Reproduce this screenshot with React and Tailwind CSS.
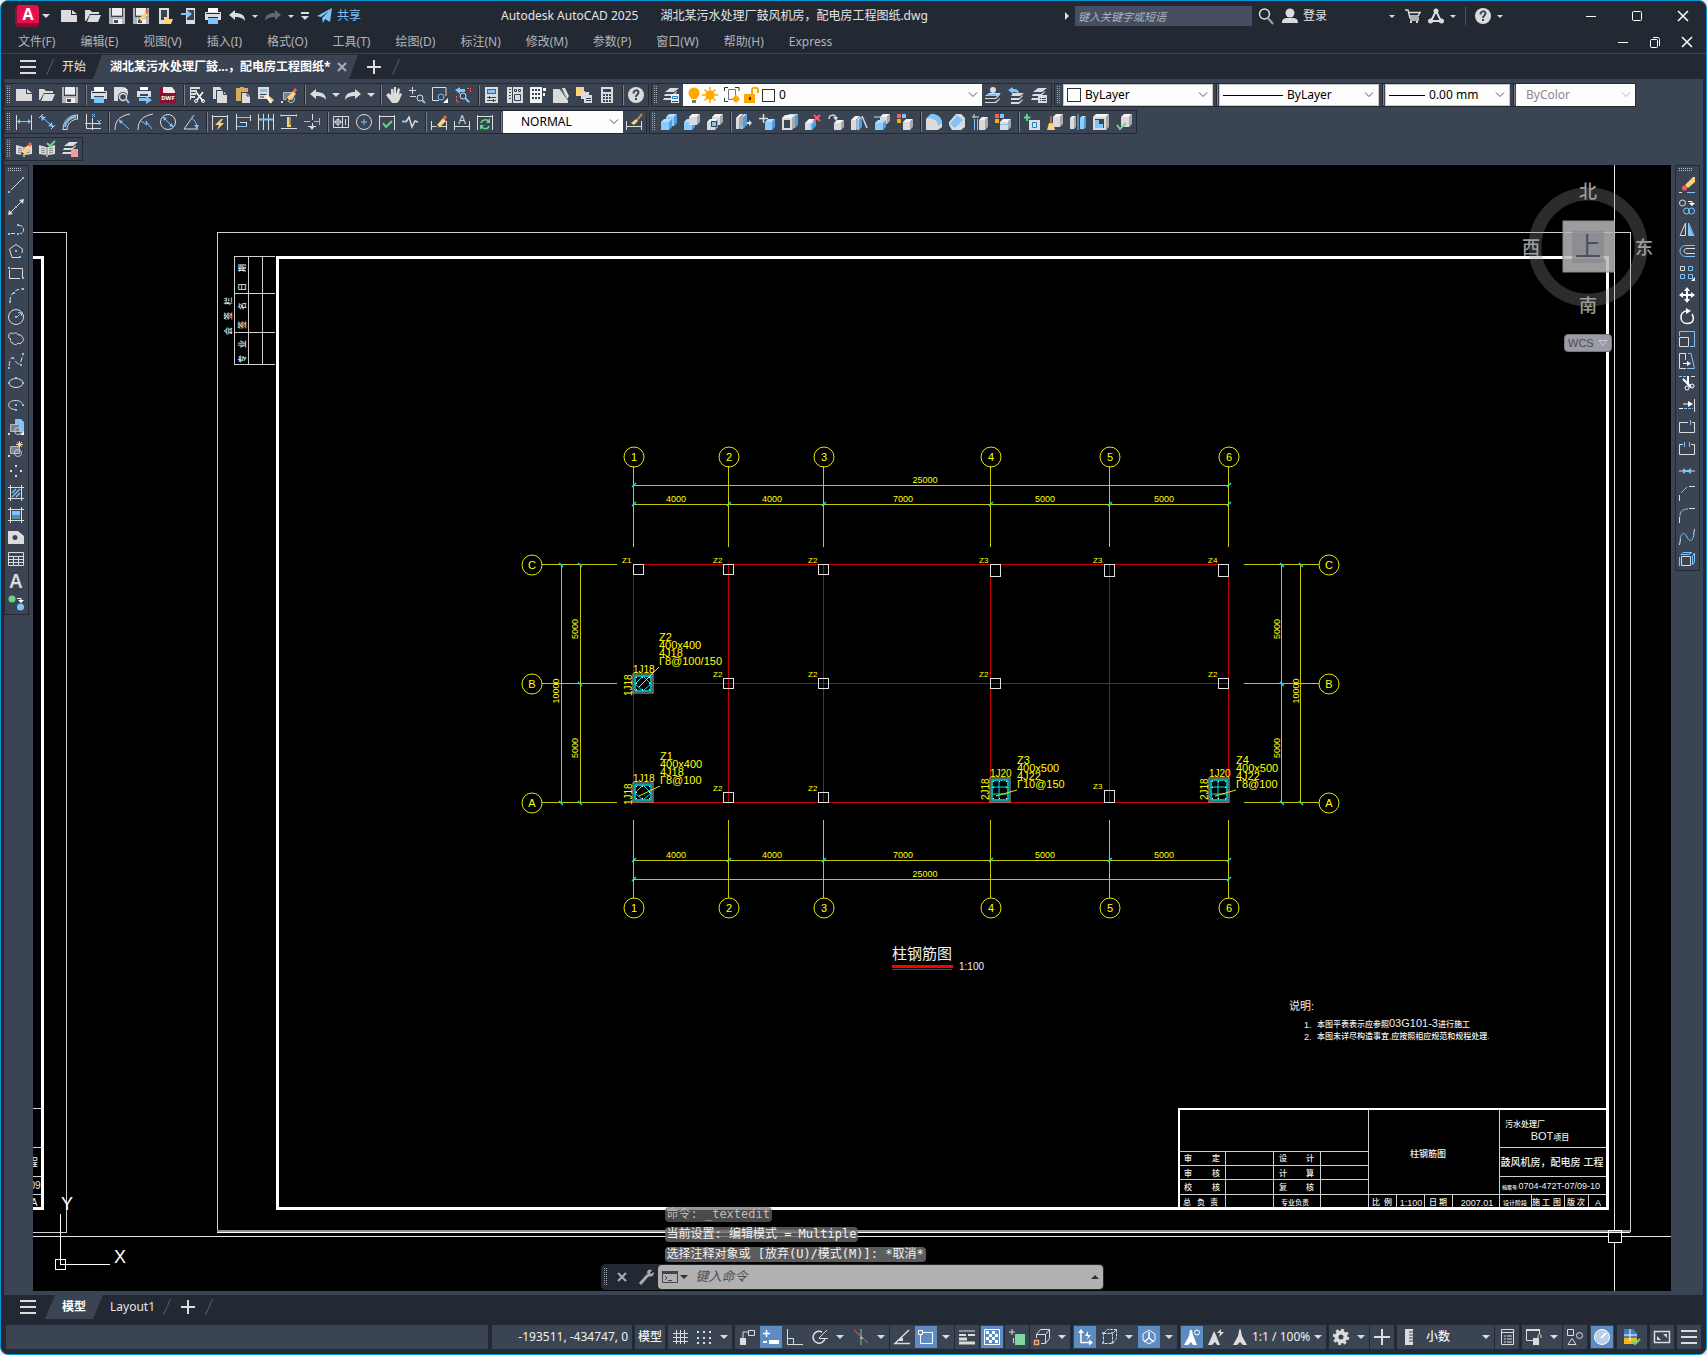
import React, { useState } from 'react'

const W = '#dcdcdc'
const B = '#7cc4fb'
const Y = '#fdd27a'
const O = '#ffa800'
const R = '#ff5a5a'
const G = '#63d788'
const D = '#3b4453'

const F = ({ d, c = W }) => <path d={d} fill={c} />
const L = ({ d, c = W, w = 1, dash }) => <path d={d} fill="none" stroke={c} strokeWidth={w} strokeDasharray={dash} />
const C = ({ x, y, r, c = W, fill = 'none', w = 1 }) => <circle cx={x} cy={y} r={r} stroke={c} fill={fill} strokeWidth={w} />
const Dots = ({ pts, c = B }) => pts.map(([x, y]) => <rect key={`${x}-${y}`} x={x} y={y} width="2" height="2" fill={c} />)

// small box with a lighter top and a darker side
const Cube = ({ x, y, w, h, k = 4, c = '#dadada', top = '#f4f4f4', side = '#a9a9a9' }) => (
  <>
    <path d={`M${x} ${y + k}h${w}v${h}h-${w}z`} fill={c} />
    <path d={`M${x} ${y + k}l${k} -${k}h${w}l-${k} ${k}z`} fill={top} />
    <path d={`M${x + w} ${y + k}l${k} -${k}v${h}l-${k} ${k}z`} fill={side} />
  </>
)
const BlueCube = (props) => <Cube {...props} c="#8ccbfc" top="#b5ddff" side="#4d9fe0" />

const pencil = <><F d="M6 11l6-7 3 3-6 6-4 1z" c={Y} /><F d="M12 3l2-2 2 2-2 3z" c={R} /><F d="M6 11l2 2-3 1z" c="#222" /></>
const printer = <><F d="M3 0h10v4H3z" c="#fff" /><F d="M0 4h16v8h-3V9H3v3H0z" /><F d="M1 5h14v1H1z" c="#222933" /><F d="M3 10h10v6H3z" c={B} /></>
const floppy = <><F d="M0 0h16v16H0z" c="#b4b4b4" /><F d="M3 0h10v7H3z" c="#eee" /><F d="M2 0h1v8h10V0h1v9H2z" c={D} /><F d="M4 11h9v5H4z" c="#eee" /><F d="M5 12h4v3H5z" c={D} /></>
const doc = <><F d="M0 2h10v5h6v7H0z" /><F d="M11 2l5 4h-5z" /></>
const folder = <><F d="M0 2h5l2 2h7v2H5L1 13H0z" /><F d="M5 7h11l-3 7H2z" /></>
const lens = <><C x={11} y={11} r={3} /><L d="M13 13l3 3" w={2} c={B} /></>
const undo = <F d="M0 7l6-5v3c6 0 10 2 10 8-2-3-5-4-10-4v3z" />
const redo = <F d="M16 7l-6-5v3C4 5 0 7 0 13c2-3 5-4 10-4v3z" />
const calc = <><F d="M2 0h12v16H2z" /><F d="M4 2h8v3H4z" c={D} /><F d="M4 7h2v2H4zM7 7h2v2H7zM10 7h2v2h-2zM4 10h2v2H4zM7 10h2v2H7zM10 10h2v2h-2zM4 13h2v2H4zM7 13h2v2H7zM10 13h2v2h-2z" c={D} /></>
const layers = <><F d="M7 1h9l-5 4H2z" /><F d="M2 7h8l4-3v1l-4 4H1z" /><F d="M1 11h9l3-3v1l-3 4H0z" /></>
const book = <><F d="M0 4l7 2v8l-7-1zM16 4l-7 2v8l7-1z" /><L d="M2 7l4 1M2 9l4 1M2 11l4 1M14 7l-4 1M14 9l-4 1M14 11l-4 1" c="#888" /><F d="M7 6h2v10H7z" c="#aaa" /></>
const question = <><circle cx="8" cy="8" r="8" fill={W} /><L d="M5.500 6.500c0-4 5-4 5-1 0 2-2.500 2-2.500 4.500" c={D} w={2} /><F d="M7 11h2v2H7z" c={D} /></>
const dimH = <L d="M.5 1v15M15.500 1v15" />
const block = <><L d="M2.500 5.500h9v7h-9z" c="#b6bac2" /><F d="M3 6h8v6H3z" c="#7b818c" /><C x={10} y={12} r={3.5} c="#c5c8ce" /><F d="M0 14h2v2H0z" /></>

const icons = {
  doc, folder, floppy, printer, undo, redo, layers, calc, question,
  saveAs: <>{floppy}{pencil}</>,
  phoneOpen: <><F d="M2 0h10v16H2z" /><F d="M4 2h6v10H4z" c={D} /><F d="M7 9h4l1 2h4l-2 5H7z" c={Y} /></>,
  phoneSave: <><F d="M5 0h9v16H5z" /><F d="M6 2h7v10H6z" c={D} /><F d="M0 5h6V2l5 4-5 4V7H0z" c={B} /></>,
  redoDim: <g opacity="0.35">{redo}</g>,
  plane: <><F d="M0 8L15 0l-2 14-5-3-2 4-1-5 7-7-8 6z" c={B} /></>,
  search: <><C x={6.5} y={6} r={5} w={1.5} /><L d="M10 10l5 6" w={2} c="#aaa59a" /></>,
  user: <><circle cx="8" cy="5" r="4.500" fill={W} /><F d="M0 15c0-6 5-5 8-5s8-1 8 5z" /></>,
  cart: <><L d="M0 2h3l2 8h9M4 4.500h11l-2 3.500H5M5 12h9" w={1.5} /><Dots pts={[[5, 13], [11, 13]]} c={W} /></>,
  autodesk: <><L d="M8 3L3 13M8 3l5 10M3 13h10" w={2} /><circle cx="8" cy="3" r="2.500" fill={W} /><circle cx="2.500" cy="13" r="2.500" fill={W} /><circle cx="13.500" cy="13" r="2.500" fill={W} /></>,
  preview: <><F d="M0 0h9l5 4v5H0z" /><F d="M10 0l4 3h-4z" c="#fff" /><F d="M0 9h4v5H0z" /><circle cx="9" cy="10" r="5" fill={D} /><C x={9} y={10} r={3.5} w={1.5} /><L d="M12 12l3 4" w={2} c={B} /></>,
  plot: <><F d="M3 0h8v3H3z" c="#fff" /><F d="M0 4h14v6H0z" /><F d="M3 7h8v2H3z" c={D} /><F d="M2 11h7V9l6 4-6 4v-3H2z" c={B} /></>,
  dwf: <><F d="M0 0h12l4 4v12H0z" c="#8a1230" /><F d="M3 0h9l3 4v2H3z" c="#f1e9ea" /><text x="8" y="13" fontSize="6" fontWeight="700" textAnchor="middle" fill="#fff">DWF</text></>,
  cut: <><F d="M1 0h10v2H1zM1 3h7v2H1zM1 6h6v2H1zM1 9h5v2H1zM1 0h1v13H1z" /><L d="M7 5l7 9M14 5l-6 8" c="#fff" w={1.5} /><C x={7} y={14} r={1.5} c="#fff" /><C x={14} y={14} r={1.5} c="#fff" /></>,
  copy: <><F d="M1 0h7l2 3H4v9H1z" /><F d="M5 4h6l4 4v8H5z" /><L d="M11.500 4v3.500H15" c={D} /></>,
  paste: <><F d="M1 1h4V0h4v1h4v4H6v9H1z" c="#d9a95f" /><F d="M7 6h5l3 3v7H7z" /><L d="M12 6v3h3" c={D} /></>,
  match: <><F d="M0 0h11v12H0z" /><F d="M2 2h7v3H2z" c={B} /><L d="M2 7.500h7M2 10h4" c={D} /><F d="M7 10l3-2 6 5-3 3z" c={Y} /><L d="M8 8l5 8" c="#fff" w={2} /></>,
  blockEdit: <>{block}{pencil}</>,
  hand: <F d="M3 6l2 2V2h2v5l1-7h2v7l2-6 2 1-1 6 1-2 2 1-3 7-2 2H6L0 8z" />,
  zoomRt: <><L d="M3.500 0v7M0 3.500h7M1 9.500h6" />{lens}</>,
  zoomWin: <><L d="M14 9V.5H.5v13H7" /><C x={9} y={10} r={3} c={B} /><F d="M16 11v5h-5z" c="#fff" /></>,
  zoomPrev: <><F d="M0 3l5-3v2h5v3H5v2z" c={B} /><L d="M12 1.500h3M15.500 5V1M1.500 9v6H5M15 15h-3" c={R} dash="2 1" /><C x={8} y={9} r={3} /><L d="M10 11l4 4" w={2} c={B} /></>,
  props: <><F d="M1 0h13v16H1z" /><F d="M3 2h9v5H3z" c="#1f6fb5" /><F d="M4 3h7v3H4z" c={B} /><L d="M3 10.500h9M3 13.500h9M5.500 9v3M9.500 12v3" c={D} /></>,
  center: <><F d="M0 0h16v16H0z" /><L d="M2 2.500h2M2 5.500h2M2 8.500h2M2 11.500h2M5.500 0v16" c={D} /><L d="M7.500 2.500h2v2h-2zM11.500 2.500h2v2h-2zM7.500 7.500h6v6h-6z" c={D} /></>,
  palette: <><F d="M0 0h12v16H0zM13 1h3v3h-3zM13 6h2v3h-2z" c="#f2f2f2" /><L d="M2 3h8M2 7h8M2 11h8" w={2} dash="2 1" c={D} /></>,
  sheets: <><F d="M0 2h8l7 10v4H0z" /><L d="M7 2l8 11" c={D} /><F d="M9 1l3 0 4 8-2 3z" /></>,
  markup: <><F d="M0 0h8v9H0z" c={Y} /><F d="M5 4h4v8H5zM9 5h4v3H9z" /><F d="M8 8h8v8H8z" /><L d="M10 11.500h5M10 13.500h5" c={D} /></>,
  layerProps: <>{layers}<F d="M8 7h8v9H8z" c="#eee" /><L d="M9.500 9.500h5v2h-5z" c="#1b84d8" /><L d="M9 14.500h6" c={D} /></>,
  bulb: <><circle cx="8" cy="6" r="5.500" fill={O} /><F d="M5 10h6v2H5z" c={O} /><F d="M6 13h4v3H6z" c="#777" /></>,
  sun: <><circle cx="8" cy="8" r="4.500" fill={O} /><L d="M8 0v16M0 8h16M2.500 2.500l11 11M13.500 2.500l-11 11" c={O} w={1.5} /></>,
  vpSun: <><L d="M4.500 2.500h7v10h-7z" c="#777" /><L d="M.5 4V.5H4M11 .5h4V4M.5 11v3.500H4" c="#333" /><circle cx="12" cy="12" r="3" fill={O} /><L d="M12 7v9M7.500 12H16" c={O} /></>,
  unlock: <><F d="M1 7h11v9H1z" c={O} /><L d="M9 7V3c0-3 6-3 6 0v3" c={O} w={2} /><F d="M6 10h2v3H6z" c="#333" /></>,
  layerMake: <><F d="M4 6h12l-4 3H0zM0 11h10l5-4v1l-4 4H0zM0 15h10l5-4v1l-4 4H0z" /><F d="M3 7h10l-3 2H2z" c={B} /><circle cx="8" cy="3" r="3" fill={W} /></>,
  layerPrev: <><F d="M5 6h11l-4 3H3zM3 11h8l4-3v1l-4 4H3zM3 15h8l4-3v1l-4 4H3z" /><F d="M0 3l5-3v2c4 0 6 1 6 5-2-2-3-2-6-2v2z" c={B} /></>,
  layerStates: <>{layers}<F d="M7 8h9v8H7z" /><L d="M9 11.500h6M9 13.500h6" c={D} dash="1 1 4 1" /></>,

  dimLinear: <>{dimH}<L d="M1 7.500h14" c={B} /><F d="M1 7.500l3-2.500v5zM15 7.500l-3-2.500v5z" c={B} /></>,
  dimAligned: <><L d="M0 4l4-4M12 15l4-4" /><L d="M2 2l12 11" c={B} /><F d="M2 2l5 1-4 4zM14 13l-5-1 4-4z" c={B} /></>,
  dimArc: <><L d="M1 16C1 7 7 1 16 1M5 16c0-6 5-11 11-11M1 15.500h4M15.500 1v4" /><L d="M3 13C4 8 8 3 14 3" c={B} w={2} /></>,
  dimOrd: <><L d="M1.500 0v14.500H16M7.500 4v12M0 9.500h16" /><L d="M7 0l3 3M10 0L7 3M12 6l2 2 2-2M14 8v3" c={B} /></>,
  dimRad: <><L d="M1 16C1 6 6 2 16 0" /><L d="M5 6l10 9" c={B} /><F d="M5 6l4 1-3 3z" c={B} /></>,
  dimJog: <><L d="M1 16C1 6 6 2 16 0" /><L d="M4 7l6 4-1-4 6 8" c={B} /></>,
  dimDia: <><C x={8} y={8} r={7.5} /><L d="M3 3l10 10" c={B} /><F d="M3 3l4 1-3 3zM13 13l-4-1 3-3z" c={B} /></>,
  dimAng: <><L d="M11 1L1 15h14" /><L d="M8 4c4 2 6 6 6 11" c={B} /><F d="M14 15l-3-4h5z" c={B} /></>,
  dimQuick: <>{dimH}<L d="M1 2.500h14" /><F d="M9 5l-6 6h4l-2 5 7-7H8l3-4z" c={Y} /></>,
  dimBase: <><L d="M1.500 0v16M5 8.500h6M11.500 8v4" /><L d="M2 3.500h13M2 12.500h10" c={B} /><L d="M15.500 1v6" /></>,
  dimCont: <><L d="M.5 0v16M5.500 0v16M10.500 0v16M15.500 0v16" /><L d="M1 5.500h14" c={B} w={2} /></>,
  dimSpace: <><L d="M0 1.500h16M0 14.500h16M0 .5v2M15.500 .5v2" /><F d="M6 3h4v10H6z" c={Y} /><L d="M8 4h2M8 6h2M8 8h2M8 10h2" c={D} /></>,
  dimBreak: <><L d="M0 7.500h6M10 7.500h6M15.500 4v7" c={B} /><L d="M8.500 0v6M8.500 9v6M4 12.500h8" /><F d="M8 16l-3-4h6z" /></>,
  tol: <><L d="M.5 2.500h15v11H.5zM9.500 3v10" /><C x={5} y={8} r={2.5} /><L d="M5 4v8M1 8h8M12.500 5v6" /></>,
  centerMark: <><C x={8} y={8} r={7.5} /><L d="M8 5v6M5 8h6" c={B} /></>,
  inspect: <>{dimH}<L d="M1 2.500h14" /><L d="M4 9l3 4 6-6" c={G} w={2} /></>,
  jogLine: <><L d="M0 7.500h4" c={B} w={2} /><L d="M4 8l3-5 3 10 3-6 3 1" w={1.5} /></>,
  dimEdit: <><L d="M.5 7v9M15.500 7v9M1 12.500h14" />{pencil}</>,
  dimText: <><L d="M.5 7v9M15.500 7v9M1 12.500h14" /><text x="8" y="10" fontSize="12" textAnchor="middle" fill={W}>A</text></>,
  dimUpdate: <>{dimH}<L d="M1 2.500h14" /><L d="M4 9c1-4 7-4 8-1M12 12c-1 4-7 3-8 0" c={G} w={1.5} /><F d="M13 4v5H9zM3 16v-5h4z" c={G} /></>,
  dimStyle: <><L d="M.5 7v9M15.500 7v9M1 12.500h14" /><F d="M5 9l5-4 2 2-4 4z" c={Y} /><L d="M11 6l5-6" c="#b78a50" w={2} /></>,

  union: <><BlueCube x={5} y={0} w={8} h={9} k={3} /><BlueCube x={0} y={5} w={8} h={8} k={3} /></>,
  subtract: <><BlueCube x={0} y={5} w={8} h={8} k={3} /><Cube x={5} y={0} w={8} h={8} k={3} /></>,
  intersect: <><Cube x={5} y={0} w={8} h={8} k={3} /><Cube x={0} y={5} w={8} h={8} k={3} /><F d="M4 7h6v6H4z" c={D} /><F d="M5 8h4v4H5z" c={B} /></>,
  extrudeFace: <><BlueCube x={4} y={0} w={3} h={11} /><Cube x={0} y={0} w={3} h={11} /><F d="M11 8h2V6l3 3-3 3v-2h-2z" /></>,
  moveFace: <><L d="M4.500 0v9M0 4.500h9" w={1.5} /><BlueCube x={6} y={5} w={7} h={8} k={3} /></>,
  offsetFace: <><BlueCube x={4} y={0} w={9} h={11} k={3} /><Cube x={0} y={1} w={10} h={12} k={3} /><F d="M2 6h6v8H2z" c={D} /></>,
  deleteFace: <><Cube x={0} y={5} w={6} h={7} /><BlueCube x={5} y={6} w={2} h={6} /><L d="M9 1l6 6M15 1L9 7" c={R} w={2} /></>,
  rotateFace: <><L d="M1 5C1 0 8 0 8 4" w={1.5} /><F d="M5 3h5L8 7z" /><Cube x={6} y={6} w={7} h={7} k={3} /></>,
  taperFace: <><Cube x={0} y={2} w={5} h={10} /><BlueCube x={6} y={3} w={2} h={10} k={3} /><L d="M11 2l5 12" w={1.5} /></>,
  copyFace: <><Cube x={6} y={0} w={7} h={7} k={3} /><BlueCube x={1} y={6} w={8} h={7} k={3} /><L d="M0 3h6" /></>,
  colorFace: <><F d="M0 0h4v4H0z" c={R} /><F d="M5 0h4v4H5z" c={B} /><F d="M0 5h4v4H0z" c={O} /><Cube x={6} y={5} w={7} h={8} k={3} /></>,
  fillet3d: <><F d="M5 0c7 0 11 4 11 10v3l-4 3H9L0 8V5z" /><F d="M5 0c7 0 11 4 11 9l-4 3C12 7 8 4 1 4z" c={B} /><F d="M0 5c6 0 10 3 11 8v3H0z" /></>,
  chamfer3d: <><F d="M7 0h5l4 4v9l-4 3H3L0 11V8z" /><F d="M8 1l6 5-8 8-5-4z" c={B} /></>,
  copyEdge: <><L d="M2.500 5v11M5.500 5v11" c={B} /><L d="M0 3h7M2 0v4" /><Cube x={7} y={3} w={6} h={10} k={3} /></>,
  colorEdge: <><F d="M0 0h4v4H0z" c={R} /><F d="M5 0h4v4H5z" c={B} /><F d="M0 5h4v4H0z" c={O} /><Cube x={5} y={5} w={8} h={8} k={3} /><F d="M5 10h9v1H5z" c={B} /></>,
  imprint: <><L d="M3 0v7M0 3.500h6.500" c={G} w={2} /><F d="M5 6h11v10H5z" /><L d="M8.500 8.500h4v5h-4z" c="#1b84d8" /></>,
  clean: <><Cube x={6} y={0} w={7} h={10} k={3} /><F d="M2 9h4l2 7H0z" c={Y} /><L d="M4 2v8" c="#b78a50" w={1.5} /></>,
  separate: <><Cube x={0} y={2} w={4} h={11} k={2} /><BlueCube x={10} y={2} w={4} h={11} k={2} /><L d="M8 0v16" c={B} /></>,
  shell: <><Cube x={0} y={0} w={13} h={13} k={3} /><F d="M2 5h9v9H2z" c={D} /><F d="M2 6h4v4h4v4H2z" c={B} /></>,
  check3d: <><Cube x={5} y={0} w={8} h={10} k={3} /><L d="M1 11l3 4 6-6" c={G} w={2} /></>,

  bookEdit: <>{book}{pencil}</>,
  bookCheck: <>{book}<L d="M8 2l3 3 5-5" c={G} w={2} /></>,
  layerDel: <>{layers}<F d="M9 8h7v8H9z" c="#f99a9a" /></>,

  line: <><L d="M3 13L14 2" /><Dots pts={[[0, 14], [14, 0]]} /></>,
  xline: <><L d="M2 14L14 2" /><F d="M16 0l-1 5-4-4zM0 16l1-5 4 4z" /><Dots pts={[[7, 7]]} /></>,
  pline: <><L d="M3 12.500h5M11 4.500c6 0 6 8 1 8" dash="4 1" /><Dots pts={[[0, 12], [9, 12], [9, 3]]} /></>,
  polygon: <><L d="M14 10l.5-4L8 1.500 1.500 6 4 14.500h7" /><Dots pts={[[7, 7], [11, 13]]} /></>,
  rect: <><L d="M3 3.500h11.500V12M12 13.500H1.500V5" /><Dots pts={[[0, 2], [14, 12]]} /></>,
  arc: <><L d="M2 14c0-7 5-12 12-12" dash="4 2" /><Dots pts={[[1, 14], [5, 5], [14, 1]]} /></>,
  circle: <><C x={8} y={8} r={7.5} /><L d="M9 8l4-4M10 3.500h3.500V7" c={B} /><Dots pts={[[7, 7]]} /></>,
  cloud: <L d="M1 5c-1-3 3-4 4-2 2-2 5-1 5 1 3-1 4 1 4 2 2 1 2 4 0 5-1 2-3 2-4 1-1 2-5 2-5 0-3 0-3-3-2-4-2 0-3-2-2-3z" />,
  spline: <><L d="M1 13c1-8 3-10 5-7s5 8 7 2l2-6" dash="5 2" /><Dots pts={[[0, 14], [4, 4], [12, 11], [14, 0]]} /></>,
  ellipse: <><ellipse cx="8" cy="8" rx="7" ry="4.500" fill="none" stroke={W} /><Dots pts={[[0, 7], [7, 2], [14, 7]]} /></>,
  ellipseArc: <><L d="M7 12.500C-2 12-1 3.500 7 3.500c5 0 7 2 7 3" /><Dots pts={[[7, 7], [14, 7], [7, 12]]} /></>,
  insert: <><F d="M7 0h6l3 3v10H9V6H7z" c={B} />{block}<F d="M16 12v4h-4z" c="#fff" /></>,
  makeBlock: <>{block}<L d="M11.500 0v7M8 3.500h7M9 1l5 5M14 1L9 6" c={Y} /></>,
  point: <Dots pts={[[7, 2], [7, 12], [2, 7], [12, 7]]} c={W} />,
  hatch: <><L d="M0 2.500h16M0 13.500h16M2.500 0v16M13.500 0v16" /><L d="M4 8l4-4M4 12l8-8M8 12l4-4" c={B} w={1.5} /></>,
  gradient: <><L d="M0 2.500h16M0 13.500h16M2.500 0v16M13.500 0v16" /><F d="M4 4h8v4H4z" c={B} /><F d="M4 8h8v4H4z" c="#5f88ad" /></>,
  region: <><F d="M0 2h10l6 5v8H0z" /><circle cx="7" cy="8.500" r="2.500" fill={D} /></>,
  table: <L d="M.5 1.500h15v13H.5zM0 5.500h16M0 8.500h16M0 11.500h16M5.500 5v10M10.500 5v10" />,
  text: <text x="8" y="15" fontSize="19" fontWeight="600" textAnchor="middle" fill={W}>A</text>,
  addSel: <><circle cx="4" cy="4" r="3.500" fill={G} /><circle cx="12.500" cy="12" r="3.500" fill={B} /><L d="M9 3.500h4V6" c="#fff" /><F d="M10 5h6l-3 3z" c="#fff" /></>,

  erase: <><F d="M6 8l8-8h2v5l-7 6z" c={Y} /><circle cx="5.500" cy="11" r="2.500" fill={R} /><L d="M8 15.500h8" c={B} /><L d="M0 15.500h3" /></>,
  copyObj: <><C x={3.5} y={4} r={3} /><L d="M9 2.500h4V6" c="#fff" /><F d="M10 4h6l-3 3z" c="#fff" /><C x={7.500} y={12} r={3} c={B} /><C x={12.500} y={12} r={3} c={B} /></>,
  mirror: <><L d="M6.500 2v12.500H1z" /><L d="M9.500 2v12.500H15z" c={B} /><F d="M10 4l4 10h-4z" c={B} /></>,
  offset: <><L d="M16 2.500H7c-8 0-8 11 0 11h9" c={B} /><L d="M16 5.500H8c-4 0-4 5 0 5h8" /></>,
  array: <><L d="M1.500 1.500h4v4h-4z" /><L d="M9.500 1.500h4v4h-4zM1.500 9.500h4v4h-4zM9.500 9.500h4v4h-4z" c={B} /><F d="M16 12v4h-4z" c="#fff" /></>,
  move: <><L d="M8 2v12M2 8h12" c="#fff" w={2} /><F d="M8 0l3 4H5zM8 16l-3-4h6zM0 8l4-3v6zM16 8l-4-3v6z" c="#fff" /></>,
  rotate: <><L d="M8 2C0 2 0 14.500 8 14.500S15 8 13 5" c="#fff" w={1.5} /><F d="M7-1l5 3-5 3z" c="#fff" /></>,
  scale: <><L d="M.5 5V.5h15v15H11" c={B} /><L d="M.5 6.500h9v9h-9z" /></>,
  stretch: <><L d="M7 .5H.5v15H7M6.500 0v7" /><L d="M9 .5h3l3.500 15H8" c={B} /><L d="M4 10.500h6" c="#fff" /><F d="M8 8l4 2.500L8 13z" c="#fff" /></>,
  trim: <><L d="M0 1.500h10" c={B} dash="3 1" /><L d="M12 1.500h4" /><L d="M4 4l8 8M9 1v9" c="#fff" w={2} /><C x={8} y={13} r={2} c="#fff" /><C x={13} y={11} r={2} c="#fff" /></>,
  extend: <><L d="M15.500 2v13" /><L d="M4 7h6M0 11.500h4" c="#fff" /><F d="M9 4l5 3-5 3z" c="#fff" /><L d="M5 11.500h9" c={B} dash="3 1" /></>,
  breakPt: <><L d="M9 3.500H.5v10h15v-10H13" /><L d="M11.500 1v5" c={B} /></>,
  breakObj: <><L d="M4 3.500H.5v10h15v-10H12" /><L d="M5.500 1v5M10.500 1v5" c={B} /></>,
  join: <><L d="M0 8h16" /><F d="M8 8L4 5v6zM8 8l4-3v6z" c={B} /><L d="M4 8h8" c={B} w={2} /></>,
  chamfer: <><L d="M10 1.500h6M.5 16v-6" /><L d="M2 8l6-6" c={B} /></>,
  fillet: <><L d="M10 1.500h6M.5 16v-6" /><L d="M1 9c0-5 3-7 8-7" c={B} /></>,
  blend: <><L d="M.5 16l1-6M15.500 0l-1 6" /><L d="M1 10c2-8 5-6 7-2s5 6 7-2" c={B} /></>,
  explode: <><L d="M2.500 5.500h9v9h-9z" /><L d="M4 1.500h9l-3 2H2zM15.500 2v9l-2 3V5zM.5 6v9" c={B} /></>,

  grid: <L d="M4.500 1v14M8.500 1v14M12.500 1v14M1 4.500h15M1 8.500h15M1 12.500h15" />,
  snap: <Dots pts={[[1, 2], [7, 2], [13, 2], [1, 8], [7, 8], [13, 8], [1, 13], [7, 13], [13, 13]]} c={W} />,
  infer: <><F d="M1 9h6v7H1z" /><L d="M4 9V3h5M9.500 1.500h6v5h-6z" /></>,
  dyn: <><L d="M3.500 1v7M0 4.500h7" c="#fff" w={1.5} /><F d="M0 12h4v2H0zM6 11h10v4H6z" c="#fff" /></>,
  ortho: <L d="M.5 0v15.500H16M.5 9.500h6v6" />,
  polar: <><L d="M13 9a6 6 0 1 1-3-6" w={1.5} /><L d="M7 9l8-8M7 9.500h9" /></>,
  iso: <><L d="M1 1l14 13" c={R} /><L d="M8 0v16" c={G} /><L d="M7 9h3" c={W} /></>,
  track: <><L d="M15 1L1 14.500h15" w={1.5} /><F d="M5 9h4v3H5z" /></>,
  osnap: <><L d="M5 3.500h9.500v11H2.500V6" c="#fff" /><L d="M.5 1.500h4v4h-4z" c="#fff" /></>,
  lineweight: <><L d="M0 2h16" /><L d="M0 6h7M9 6h7" w={2} /><L d="M0 10h8" w={3} /><L d="M0 14h16" w={3} /></>,
  transparency: <><L d="M.5.5h15v15H.5z" c="#fff" /><F d="M2 2h3v3H2zM8 2h3v3H8zM5 5h3v3H5zM11 5h3v3h-3zM2 8h3v3H2zM8 8h3v3H8zM5 11h3v3H5zM11 11h3v3h-3z" c="#fff" /></>,
  cycling: <><F d="M6 5h10v11H6z" c="#7ed9a0" /><L d="M3 0v6M0 3h6M4.500 9v5" /></>,
  osnap3d: <><L d="M2.500 9V5.500h9v9H7M2.500 5.500l4-5h9l-4 5M15.500 .5v9l-4 5" /><L d="M.5 11.500h4v4h-4z" c="#f6a77a" w={1.5} /></>,
  ucs: <><L d="M4 2v11.500h10" c="#fff" w={1.5} /><F d="M4 0l3 4H1zM16 13.500l-4-3v6z" c="#fff" /><F d="M11 2l-3 5h3l-1 4 4-5h-3z" c="#fff" /></>,
  filter: <><L d="M2.500 4.500h9v10h-9zM2.500 4.500l4-4h9l-4 4M15.500 .5v9l-4 5" dash="3 1" /><Dots pts={[[1, 3], [10, 3], [1, 13], [10, 13]]} /></>,
  gizmo: <><L d="M8 1L2 5v6l6 4 6-4V5z" c="#fff" /><L d="M8 3v6M8 9l-5 4M8 9l5 4" c="#fff" w={1.5} /></>,
  annoVis: <><F d="M6 1l2 0 1 5 4 10H9l-2-3-3 3H0L5 7z" c="#fff" /><C x={13} y={3.500} r={2.500} c="#fff" /></>,
  annoAuto: <><F d="M6 2l2 4 4 10H9l-2-3-3 3H0L4 7z" /><F d="M13 0l-4 4h3l-1 4 5-5h-3z" /></>,
  anno: <F d="M7.500 0h1L10 7l5 9h-4l-3-3-3 3H1l5-9z" />,
  gear: <><circle cx="8" cy="8" r="4.500" fill="none" stroke={W} strokeWidth="4" /><circle cx="8" cy="8" r="7" fill="none" stroke={W} strokeWidth="2.500" strokeDasharray="2.800 2.700" /></>,
  plus: <L d="M8 0v16M0 8h16" w={2} />,
  ruler: <><F d="M4 0h8v16H4z" /><L d="M8 3h4M8 6h4M8 9h4M8 12h4" c={D} /></>,
  quick: <><L d="M2.500.5h12v15h-12zM2 3.500h13" /><L d="M5 7h8M5 10h8M5 13h8" dash="2 1 5 1" /></>,
  lockUi: <><L d="M7 11.500H.5v-11h13V5" /><F d="M0 0h14v2H0zM7 9h6v7H7z" /><L d="M12 9V7c0-2 3-2 3 0v2" /></>,
  isolate: <><L d="M.5.5h6v6h-6zM5 9.500L1 15.500h8z" /><C x={12.500} y={6.500} r={3} /></>,
  clock: <><circle cx="8" cy="8" r="7.500" fill="#b8cfea" stroke="#fff" /><L d="M7 9l5-5" c="#fff" w={2} /></>,
  cadFile: <><F d="M0 0h9l4 4v6H0z" c="#3f7dc4" /><F d="M0 9h13v6H0z" c="#fdb913" /><L d="M6 0v12M0 6h13" c="#fff" /><L d="M8 12l3 3 5-5" c={G} w={2} /></>,
  full: <><L d="M.5 2.500h15v11H.5z" w={1.500} /><F d="M9 5h4v4zM3 7l4 4H3z" /></>,
  burger: <L d="M0 2h16M0 8h16M0 14h16" w={2} />,
  close: <L d="M3 3l10 10M13 3L3 13" w={1.500} c="#fff" />,
  closeTab: <L d="M4 4l8 8M12 4l-8 8" w={2} c="#a9adb5" />,
  minimize: <L d="M3 8.500h10" c="#fff" />,
  maximize: <rect x="3.500" y="3.500" width="9" height="9" rx="1" fill="none" stroke="#fff" />,
  restore: <><rect x="3.500" y="5.500" width="7" height="8" rx="1" fill="none" stroke="#fff" /><L d="M6 3.500h5c1 0 1.500 1 1.500 2V12" c="#fff" /></>,
  wrench: <><L d="M2 15l8-9" c="#aaa" w={3} /><path d="M9 3c1-3 4-3 5-2l-2 3 1 1 3-2c0 5-4 5-6 4z" fill="#aaa" /></>,
  console: <><L d="M.5 2.500h15v11H.5z" c="#444" /><F d="M0 2h16v3H0z" c="#444" /><L d="M3 7l2 2-2 2M6 11.500h4" c="#444" /></>,
}

const Icon = ({ name }) => (
  <svg viewBox="0 0 16 16" className="size-4 shrink-0 overflow-visible" aria-hidden="true">{icons[name]}</svg>
)

const Arrow = ({ color = W }) => (
  <svg viewBox="0 0 8 4" className="h-1 w-2 shrink-0" aria-hidden="true"><path d="M0 0h8L4 4z" fill={color} /></svg>
)

const SmallArrow = () => (
  <svg viewBox="0 0 6 3" className="h-[3px] w-[6px] shrink-0" aria-hidden="true"><path d="M0 0h6L3 3z" fill={W} /></svg>
)

const Chevron = ({ color = '#555' }) => (
  <svg viewBox="0 0 10 6" className="pointer-events-none mr-1 h-[6px] w-[10px] shrink-0" aria-hidden="true">
    <path d="M1 .5l4 4 4-4" fill="none" stroke={color} />
  </svg>
)

const Slash = () => (
  <svg viewBox="0 0 8 16" className="h-4 w-2 shrink-0" aria-hidden="true"><path d="M7.500 0l-7 16" stroke="#566070" /></svg>
)

const Grip = () => (
  <svg viewBox="0 0 5 18" className="ml-[2px] mr-px h-[18px] w-[5px] shrink-0" aria-hidden="true">
    <path d="M.5 0v18M2.500 0v18" stroke="#a5a9b1" strokeDasharray="1 1" />
  </svg>
)

const ToolButton = ({ name, className = 'w-[23px] pl-[3px]' }) => (
  <button type="button" aria-label={name} className={`flex h-[22px] shrink-0 items-center ${className}`}>
    <Icon name={name} />
  </button>
)

const Sep = () => <div className="ml-[3px] mr-px h-5 w-[2px] shrink-0 border-l border-[#222933] bg-[#7b818c]" />

const Items = ({ list }) => list.split(' ').map((name, i) => {
  if (name === '|') return <Sep key={i} />
  if (name === 'v') return <button key={i} type="button" aria-label="more" className="flex h-[22px] w-3 items-center justify-center"><Arrow /></button>
  return <ToolButton key={i} name={name} />
})

const Toolbar = ({ children }) => (
  <div role="toolbar" className="flex h-6 shrink-0 items-center border border-[#222933]">
    <Grip />
    {children}
  </div>
)

const Combo = ({ label, value, className, children, disabled }) => (
  <label className={`flex h-[22px] shrink-0 items-center bg-[#fdfdfd] text-xs text-black ${className}`}>
    {children}
    <select aria-label={label} disabled={disabled} className="min-w-0 flex-1 appearance-none bg-transparent outline-none disabled:text-[#8a8a8a]">
      <option>{value}</option>
    </select>
    <Chevron color={disabled ? '#b5b5b5' : '#555'} />
  </label>
)

const SideBar = ({ list }) => (
  <div role="toolbar" className="flex w-[25px] flex-col items-start self-start border border-[#222933]">
    <svg viewBox="0 0 14 8" className="ml-[3px] h-2 w-[14px]" aria-hidden="true">
      <path d="M0 2.500h14M0 4.500h14" stroke="#b9bcc3" strokeDasharray="1 1" />
    </svg>
    {list.split(' ').map((name) => <ToolButton key={name} name={name} />)}
  </div>
)

const menus = ['文件(F)', '编辑(E)', '视图(V)', '插入(I)', '格式(O)', '工具(T)', '绘图(D)', '标注(N)', '修改(M)', '参数(P)', '窗口(W)', '帮助(H)', 'Express']

const TitleBar = () => (
  <header className="flex h-[30px] shrink-0 items-center text-xs text-[#e4e5e7]">
    <button type="button" aria-label="AutoCAD" className="ml-[14px] flex h-[22px] w-6 items-center justify-center rounded-sm border-b-4 border-l-2 border-[#8d0f2f] bg-[#e3104f] text-base font-bold leading-none text-white">A</button>
    <div className="flex w-[18px] justify-center pr-1"><Arrow /></div>
    {['doc', 'folder', 'floppy', 'saveAs', 'phoneOpen', 'phoneSave', 'printer', 'undo'].map((n) => <ToolButton key={n} name={n} className="w-6 justify-center" />)}
    <div className="flex w-3 justify-center"><SmallArrow /></div>
    <ToolButton name="redoDim" className="w-6 justify-center" />
    <div className="flex w-3 justify-center"><SmallArrow /></div>
    <button type="button" aria-label="customize" className="flex w-4 flex-col items-center gap-[2px]">
      <span className="h-[2px] w-2 bg-[#dcdcdc]" />
      <Arrow />
    </button>
    <button type="button" className="ml-1 flex items-center gap-1 text-[#7cc4fb]"><Icon name="plane" />共享</button>
    <h1 className="flex min-w-0 flex-1 gap-[22px] overflow-hidden whitespace-nowrap pl-[140px]">
      <span>Autodesk AutoCAD 2025</span>
      <span>湖北某污水处理厂鼓风机房，配电房工程图纸.dwg</span>
    </h1>
    <svg viewBox="0 0 4 8" className="mr-[6px] h-2 w-1 shrink-0" aria-hidden="true"><path d="M0 0v8l4-4z" fill={W} /></svg>
    <input aria-label="搜索" placeholder="键入关键字或短语" className="h-5 w-[177px] bg-[#454f61] px-[3px] text-[11px] italic text-white outline-none placeholder:text-[#aeb3bd]" />
    <ToolButton name="search" className="ml-[2px] w-6 justify-center" />
    <button type="button" className="ml-1 flex items-center gap-[5px]"><Icon name="user" />登录</button>
    <div className="ml-[62px]"><SmallArrow /></div>
    <ToolButton name="cart" className="ml-[9px] w-[18px] justify-center" />
    <ToolButton name="autodesk" className="ml-1 w-5 justify-center" />
    <div className="ml-1"><SmallArrow /></div>
    <div className="ml-[9px] h-[18px] w-px bg-[#4a5362]" />
    <ToolButton name="question" className="ml-[9px] w-4" />
    <div className="ml-[6px] mr-[65px]"><SmallArrow /></div>
    <ToolButton name="minimize" className="w-[46px] justify-center" />
    <ToolButton name="maximize" className="w-[46px] justify-center" />
    <ToolButton name="close" className="w-[46px] justify-center" />
  </header>
)

const MenuBar = () => (
  <nav className="flex h-[23px] shrink-0 items-center border-b border-[#3b4453] text-xs text-[#b1b4ba]">
    <div className="flex flex-1 gap-[25px] pl-[17px]">
      {menus.map((m) => <button key={m} type="button" className="whitespace-nowrap">{m}</button>)}
    </div>
    <ToolButton name="minimize" className="w-[34px] justify-center" />
    <ToolButton name="restore" className="w-[30px] justify-center" />
    <ToolButton name="close" className="mr-[2px] w-[34px] justify-center" />
  </nav>
)

const FileTabs = () => (
  <div className="flex h-[25px] shrink-0 items-end text-xs text-[#e4e5e7]">
    <div className="flex h-6 items-center">
      <ToolButton name="burger" className="ml-[15px] w-6 justify-center" />
      <div className="ml-[6px]"><Slash /></div>
      <button type="button" className="ml-2 w-[31px] text-left">开始</button>
      <div className="flex h-6 w-[265px] items-center bg-[#3b4453] pl-[17px] font-bold text-white [clip-path:polygon(9px_0,100%_0,256px_100%,0_100%)]">
        <span className="w-[224px] whitespace-nowrap">湖北某污水处理厂鼓...，配电房工程图纸*</span>
        <ToolButton name="closeTab" className="w-4" />
      </div>
      <button type="button" aria-label="new tab" className="ml-2 mr-[10px] flex w-4 justify-center text-[#dcdcdc]">
        <svg viewBox="0 0 14 14" className="size-[14px]"><path d="M7 0v14M0 7h14" stroke="currentColor" strokeWidth="2" /></svg>
      </button>
      <Slash />
    </div>
  </div>
)

const Toolbars = () => (
  <div className="flex flex-col gap-[3px] py-1 text-xs">
    <div className="flex gap-[2px] overflow-hidden">
      <Toolbar>
        <Items list="doc folder floppy | printer preview plot dwf | cut copy paste match blockEdit | undo v redo v | hand zoomRt zoomWin zoomPrev | props center palette sheets markup calc | question" />
      </Toolbar>
      <Toolbar>
        <ToolButton name="layerProps" />
        <Combo label="图层" value="0" className="w-[299px] pl-[3px]">
          <Icon name="bulb" /><Icon name="sun" />
          <span className="ml-[6px] flex gap-[3px]"><Icon name="vpSun" /><Icon name="unlock" /></span>
          <span className="ml-[3px] mr-1 size-[13px] border border-[#333]" />
        </Combo>
        <Items list="layerMake layerPrev layerStates" />
      </Toolbar>
      <Toolbar>
        <Combo label="颜色" value="ByLayer" className="w-[150px] gap-1 border border-[#c9c9c9] pl-[3px]">
          <span className="size-[14px] border border-[#333]" />
        </Combo>
        <Sep />
        <Combo label="线型" value="ByLayer" className="w-[160px] gap-1 border border-[#c9c9c9] pl-[3px]">
          <span className="h-px w-[60px] bg-black" />
        </Combo>
        <Sep />
        <Combo label="线宽" value="0.00 mm" className="w-[125px] gap-1 border border-[#c9c9c9] pl-[3px]">
          <span className="h-px w-9 bg-black" />
        </Combo>
        <Sep />
        <Combo label="打印样式" value="ByColor" disabled className="w-[119px] pl-[10px]" />
      </Toolbar>
    </div>
    <div className="flex gap-[2px] overflow-hidden">
      <Toolbar>
        <Items list="dimLinear dimAligned dimArc dimOrd | dimRad dimJog dimDia dimAng | dimQuick dimBase dimCont dimSpace dimBreak | tol centerMark inspect jogLine | dimEdit dimText dimUpdate |" />
        <Combo label="标注样式" value="NORMAL" className="w-[120px] pl-[18px]" />
        <ToolButton name="dimStyle" />
      </Toolbar>
      <Toolbar>
        <Items list="union subtract intersect | extrudeFace moveFace offsetFace deleteFace rotateFace taperFace copyFace colorFace | fillet3d chamfer3d copyEdge colorEdge | imprint clean separate shell check3d" />
      </Toolbar>
    </div>
    <div className="flex">
      <Toolbar>
        <Items list="bookEdit bookCheck layerDel" />
      </Toolbar>
    </div>
  </div>
)

// ---- model space drawing ----
const axes = [634, 729, 824, 991, 1110, 1229]
const rows = [['C', 565], ['B', 684], ['A', 803]]
const spans = [[676, '4000'], [772, '4000'], [903, '7000'], [1045, '5000'], [1164, '5000']]

const columns = [
  [634, 565, 10], [724, 565, 10], [819, 565, 10], [991, 565, 12], [1105, 565, 12], [1219, 565, 12],
  [724, 679, 10], [819, 679, 10], [991, 679, 10], [1219, 679, 10],
  [724, 793, 10], [819, 793, 10], [1105, 791, 12],
]
const marks = [
  [622, 563, 'Z1'], [713, 563, 'Z2'], [808, 563, 'Z2'], [979, 563, 'Z3'], [1093, 563, 'Z3'], [1208, 563, 'Z4'],
  [713, 677, 'Z2'], [808, 677, 'Z2'], [979, 677, 'Z2'], [1208, 677, 'Z2'],
  [713, 791, 'Z2'], [808, 791, 'Z2'], [1093, 789, 'Z3'],
]
const details = [
  { x: 633, y: 674, h: 19, tx: 659, ty: 641, top: '1J18', side: '1J18', lines: ['Z2', '400x400', '4J18', 'Г8@100/150'] },
  { x: 633, y: 783, h: 19, tx: 660, ty: 760, top: '1J18', side: '1J18', lines: ['Z1', '400x400', '4J18', 'Г8@100'] },
  { x: 990, y: 778, h: 24, tx: 1017, ty: 764, top: '1J20', side: '2J18', lines: ['Z3', '400x500', '4J22', 'Г10@150'] },
  { x: 1209, y: 778, h: 24, tx: 1236, ty: 764, top: '1J20', side: '2J18', lines: ['Z4', '400x500', '4J22', 'Г8@100'] },
]

const Bubble = ({ x, y, t }) => (
  <>
    <circle cx={x} cy={y} r="10" fill="none" stroke="#e5e500" strokeWidth="1" />
    <text x={x} y={y + 4} fontSize="11" textAnchor="middle" fill="#ffff00">{t}</text>
  </>
)

const Plan = () => (
  <g>
    <g stroke="#c80000" shapeRendering="crispEdges" transform="translate(-1 -1)">
      {axes.map((x) => <path key={x} d={`M${x} 565V803`} />)}
      {rows.map(([n, y]) => <path key={n} d={`M634 ${y}H1229`} />)}
    </g>
    <g stroke="#c8c800" shapeRendering="crispEdges" fill="none" transform="translate(-1 -1)">
      {axes.map((x) => <path key={x} d={`M${x} 467V548M${x} 821V899`} />)}
      {rows.map(([n, y]) => <path key={n} d={`M543 ${y}H618M1245 ${y}H1320`} />)}
      <path d="M634 486H1229M634 505H1229M634 861H1229M634 880H1229M562 565V803M581 565V803M1282 565V803M1301 565V803" />
    </g>
    <g stroke="#00e5e5" strokeWidth="1.500">
      {axes.map((x) => <path key={x} d={`M${x - 2} 506l4-4M${x - 2} 862l4-4`} />)}
      {[634, 1229].map((x) => <path key={x} d={`M${x - 2} 487l4-4M${x - 2} 881l4-4`} />)}
      {rows.map(([n, y]) => <path key={n} d={`M578 ${y - 2}l4 4M1280 ${y - 2}l4 4`} />)}
      {[565, 803].map((y) => <path key={y} d={`M559 ${y - 2}l4 4M1299 ${y - 2}l4 4`} />)}
    </g>
    {axes.map((x, i) => <g key={x}><Bubble x={x} y={457} t={i + 1} /><Bubble x={x} y={908} t={i + 1} /></g>)}
    {rows.map(([n, y]) => <g key={n}><Bubble x={532} y={y} t={n} /><Bubble x={1329} y={y} t={n} /></g>)}
    <g fill="#ffff00" fontSize="9" textAnchor="middle">
      {spans.map(([x, t]) => <g key={x}><text x={x} y="502">{t}</text><text x={x} y="858">{t}</text></g>)}
      <text x="925" y="483">25000</text>
      <text x="925" y="877">25000</text>
      {[578, 1280].map((x) => (
        <g key={x}>
          <text transform={`translate(${x} 629) rotate(-90)`}>5000</text>
          <text transform={`translate(${x} 748) rotate(-90)`}>5000</text>
        </g>
      ))}
      {[559, 1299].map((x) => <text key={x} transform={`translate(${x} 691) rotate(-90)`}>10000</text>)}
    </g>
    <g fill="#ffff00" fontSize="8">
      {marks.map(([x, y, t]) => <text key={`${x}-${y}`} x={x} y={y}>{t}</text>)}
    </g>
    <g fill="none" stroke="#e0e0e0" shapeRendering="crispEdges" transform="translate(-1 -1)">
      {columns.map(([x, y, h]) => <rect key={`${x}-${y}`} x={x} y={y} width="10" height={h} />)}
    </g>
    {details.map((c) => (
      <g key={c.tx}>
        <rect x={c.x} y={c.y} width="20" height={c.h} fill="#000" stroke="#a8b8b8" />
        <rect x={c.x + 2} y={c.y + 2} width="16" height={c.h - 4} fill="none" stroke="#00e0e0" strokeWidth="1.500" />
        {c.h === 19
          ? <path d={`M${c.x + 10} ${c.y + 2}l8 8-8 7-8-7z`} fill="none" stroke="#00e0e0" />
          : <path d={`M${c.x + 9} ${c.y + 2}v20M${c.x + 2} ${c.y + 9}h16M${c.x + 2} ${c.y + 16}h16`} stroke="#00e0e0" />}
        {[3, 9, 16].map((dx) => [3, 9, c.h - 4].map((dy) => (
          (dx !== 9 || dy !== 9) && <rect key={`${dx}-${dy}`} x={c.x + dx} y={c.y + dy} width="1" height="1" fill="#fff" />
        )))}
        <path d={`M${c.x + 6} ${c.y + c.h - 6}L${c.tx} ${c.ty + 26}`} stroke="#e5e500" />
        <g fill="#ffff00" fontSize="11">
          <text x={c.x} y={c.y - 1} fontSize="10">{c.top}</text>
          <text fontSize="10" transform={`translate(${c.x - 1} ${c.y + 22}) rotate(-90)`}>{c.side}</text>
          {c.lines.map((t, i) => <text key={t} x={c.tx} y={c.ty + i * 8}>{t}</text>)}
        </g>
      </g>
    ))}
  </g>
)

const cells = [
  [1188, 1161, '审'], [1216, 1161, '定'], [1188, 1176, '审'], [1216, 1176, '核'], [1188, 1190, '校'], [1216, 1190, '核'],
  [1187, 1205, '总'], [1201, 1205, '负'], [1214, 1205, '责'],
  [1283, 1161, '设'], [1310, 1161, '计'], [1283, 1176, '计'], [1310, 1176, '算'], [1283, 1190, '复'], [1310, 1190, '核'],
  [1295, 1205, '专业负责'], [1376, 1205, '比'], [1388, 1205, '例'], [1433, 1205, '日'], [1443, 1205, '期'],
  [1536, 1205, '施'], [1546, 1205, '工'], [1557, 1205, '图'], [1571, 1205, '版'], [1581, 1205, '次'],
]

const Sheet = () => (
  <g>
    <g fill="none" stroke="#d0d0d0" shapeRendering="crispEdges" transform="translate(-1 -1)">
      <path d="M218 1233V233H1631V1233" />
      <path d="M33 233H67V1233H33" />
      <path d="M218 1232H1631" stroke="#8f8f8f" strokeWidth="3" />
      <path d="M218 1233H1631" stroke="#fff" />
      <path d="M276 257H235V365H276M249 257V365M263 257V365M235 294H276M235 333H276" />
      <path d="M1369 1109V1208M1500 1109V1208M1179 1152H1369M1179 1166H1369M1179 1180H1369M1179 1195H1607M1226 1152V1208M1274 1152V1208M1321 1152V1208M1500 1148H1607M1500 1177H1607M1397 1195V1208M1425 1195V1208M1453 1195V1208M1532 1195V1208M1565 1195V1208M1589 1195V1208" />
      <path d="M33 1109H42M33 1148H42M33 1177H42M33 1195H42" />
    </g>
    <g fill="none" stroke="#fff" shapeRendering="crispEdges">
      <rect x="277" y="257" width="1330" height="951" strokeWidth="3" />
      <path d="M33 257H42V1208H33" strokeWidth="3" />
      <path d="M1179 1208V1109H1607" strokeWidth="2" />
    </g>
    <g fill="#f0f0f0" fontSize="8" fontWeight="500" textAnchor="middle">
      {[[268, '期'], [287, '日'], [306, '名'], [325, '签'], [344, '业'], [359, '专']].map(([y, t]) => (
        <text key={y} transform={`translate(245 ${y}) rotate(-90)`}>{t}</text>
      ))}
      {[[301, '栏'], [316, '签'], [331, '会']].map(([y, t]) => (
        <text key={y} transform={`translate(231 ${y}) rotate(-90)`}>{t}</text>
      ))}
      {cells.map(([x, y, t]) => <text key={`${x}-${y}`} x={x} y={y} fontSize={t.length > 1 ? 7 : 8}>{t}</text>)}
      <text x="1515" y="1205" fontSize="6">设计阶段</text>
      <text x="1428" y="1157" fontSize="9">柱钢筋图</text>
      <text x="1411" y="1206" fontSize="9">1:100</text>
      <text x="1477" y="1206" fontSize="9">2007.01</text>
      <text x="1598" y="1206" fontSize="9">A</text>
      <text x="1525" y="1127" fontSize="8">污水处理厂</text>
      <text x="1550" y="1140"><tspan fontSize="11">BOT</tspan>项目</text>
      <text x="1552" y="1166" fontSize="10">鼓风机房，配电房 工程</text>
      <text x="1502" y="1189" fontSize="9" textAnchor="start"><tspan fontSize="5">档案号:</tspan>0704-472T-07/09-10</text>
      <text x="33" y="1166" fontSize="10">程</text>
      <text x="35" y="1189" fontSize="10">09</text>
      <text x="34" y="1206" fontSize="10">A</text>
    </g>
    <g fill="#f0f0f0">
      <text x="892" y="959" fontSize="15">柱钢筋图</text>
      <text x="959" y="970" fontSize="10">1:100</text>
      <text x="1289" y="1010" fontSize="11">说明:</text>
      <text x="1304" y="1028" fontSize="9">1.</text>
      <text x="1317" y="1027" fontSize="8" fontWeight="500">本图平表表示应参照<tspan fontSize="11">03G101-3</tspan>进行施工</text>
      <text x="1304" y="1040" fontSize="9">2.</text>
      <text x="1317" y="1039" fontSize="8" fontWeight="500">本图未详尽构造事宜,应按照相应规范和规程处理.</text>
    </g>
    <path d="M892 966.500H953" stroke="#f00" strokeWidth="3" />
    <path d="M892 969.500H952" stroke="#f00" />
  </g>
)

const ViewCube = () => (
  <g>
    <circle cx="1588" cy="247" r="53" fill="none" stroke="#8a8a8a" strokeOpacity="0.320" strokeWidth="13" />
    <rect x="1563" y="221" width="51" height="51" fill="#b9b9b9" fillOpacity="0.850" stroke="#8a8a8a" />
    <rect x="1572" y="231" width="32" height="32" fill="#85888f" fillOpacity="0.700" />
    <text x="1588" y="256" fontSize="26" textAnchor="middle" fill="#4c4f55">上</text>
    <g fill="#9c9c9c" fontSize="18" textAnchor="middle" fontWeight="500">
      <text x="1588" y="198">北</text>
      <text x="1588" y="312">南</text>
      <text x="1531" y="254">西</text>
      <text x="1644" y="254">东</text>
    </g>
  </g>
)

const Canvas = () => {
  const [command, setCommand] = useState('')

  return (
    <main className="relative flex min-h-0 min-w-0 flex-1 overflow-hidden bg-black">
      <svg viewBox="33 165 1638 1126" className="min-h-0 w-full flex-1 font-['Liberation_Sans_Narrow','Liberation_Sans','Noto_Sans_CJK_SC',sans-serif]">
        <Sheet />
        <Plan />
        <g fill="none" stroke="#fff" shapeRendering="crispEdges">
          <rect x="55" y="1259" width="10" height="10" />
          <path d="M60 1214V1264H110" />
          <path d="M1614 165V1230M1614 1243V1291M33 1236H1608M1621 1236H1671" stroke="#e6e6e6" />
          <rect x="1608" y="1230" width="13" height="12" />
        </g>
        <text x="120" y="1263" fontSize="18" textAnchor="middle" fill="#fff">X</text>
        <text x="67" y="1210" fontSize="18" textAnchor="middle" fill="#fff">Y</text>
        <ViewCube />
      </svg>

      <button type="button" className="absolute right-[59px] top-[169px] flex h-[18px] w-12 items-center justify-between rounded-sm border border-[#77777f] bg-[#9b9ba6] px-[3px] font-['Liberation_Sans',sans-serif] text-[11px] text-[#4c4c55]">
        WCS
        <svg viewBox="0 0 10 6" className="h-[6px] w-[10px]"><path d="M1 .5h8l-4 5z" fill="none" stroke="#c9c9d2" /></svg>
      </button>

      <div className="absolute inset-x-0 bottom-px flex justify-center">
        <div className="w-[503px]">
          <div className="mb-[2px] flex flex-col items-start gap-[5px] pl-16 font-['DejaVu_Sans_Mono','Noto_Sans_CJK_SC',monospace] text-xs leading-[15px] text-[#f2f2f2]">
            <p className="whitespace-pre rounded-sm bg-[#6a6a6a]/70 px-[2px] text-[#bdbdbd]">命令: _textedit</p>
            <p className="whitespace-pre rounded-sm bg-[#6a6a6a]/80 px-[2px]">当前设置: 编辑模式 = Multiple</p>
            <p className="whitespace-pre rounded-sm bg-[#5c5c5c] px-[2px]">选择注释对象或 [放弃(U)/模式(M)]: *取消*</p>
          </div>
          <div className="flex h-[26px] items-center rounded-sm border border-[#222933] bg-[#222933]">
            <Grip />
            <ToolButton name="closeTab" className="ml-1 w-4" />
            <ToolButton name="wrench" className="ml-2 w-4" />
            <div className="ml-auto flex h-6 w-[445px] items-center gap-[2px] rounded-sm bg-[#b1b1b1] pl-1 pr-1">
              <Icon name="console" />
              <Arrow color="#333" />
              <input
                aria-label="命令行"
                value={command}
                onChange={(e) => setCommand(e.target.value)}
                placeholder="键入命令"
                className="ml-[6px] min-w-0 flex-1 bg-transparent text-[13px] italic text-black outline-none placeholder:text-[#4d4d4d]"
              />
              <svg viewBox="0 0 8 4" className="h-1 w-2"><path d="M0 4h8L4 0z" fill="#333" /></svg>
            </div>
          </div>
        </div>
      </div>
    </main>
  )
}

const LayoutTabs = () => (
  <div className="flex h-6 shrink-0 items-center text-xs text-[#e4e5e7]">
    <ToolButton name="burger" className="ml-[15px] w-6 justify-center" />
    <button type="button" className="ml-[5px] h-6 w-[58px] bg-[#3b4453] font-bold text-white [clip-path:polygon(10px_0,100%_0,48px_100%,0_100%)]">模型</button>
    <button type="button" className="ml-[7px] w-[53px] text-left">Layout1</button>
    <Slash />
    <button type="button" aria-label="new layout" className="mx-[10px] text-[#dcdcdc]">
      <svg viewBox="0 0 14 14" className="size-[14px]"><path d="M7 0v14M0 7h14" stroke="currentColor" strokeWidth="2" /></svg>
    </button>
    <Slash />
  </div>
)

const Cell = ({ children }) => <div className="flex h-6 items-center bg-[#3b4453]">{children}</div>
const Group = ({ children }) => <div className="flex gap-px">{children}</div>
const St = ({ name, on }) => (
  <button type="button" aria-label={name} aria-pressed={!!on} className={`mx-px flex size-[22px] items-center justify-center ${on ? 'bg-[#5c8cc1]' : ''}`}>
    <Icon name={name} />
  </button>
)
const StArrow = () => <button type="button" aria-label="options" className="flex h-[22px] w-4 items-center justify-center"><Arrow /></button>

const StatusBar = () => (
  <footer className="flex h-6 shrink-0 gap-[3px] px-[5px] text-xs text-[#f0f0f0]">
    <div className="mr-px min-w-0 flex-1 bg-[#3b4453]" />
    <Cell><button type="button" className="w-[140px] whitespace-nowrap pr-1 text-right">-193511, -434747, 0</button></Cell>
    <Cell><button type="button" className="w-[30px] text-center font-medium">模型</button></Cell>
    <Cell><St name="grid" /><St name="snap" /><StArrow /></Cell>
    <Group>
      <Cell>
        <St name="infer" /><St name="dyn" on /><St name="ortho" />
        <span className="flex items-center pl-px"><St name="polar" /><StArrow /></span>
        <span className="flex items-center pl-px"><St name="iso" /><StArrow /></span>
      </Cell>
      <Cell><St name="track" /><St name="osnap" on /><StArrow /></Cell>
      <Cell><St name="lineweight" /></Cell>
      <Cell><St name="transparency" on /></Cell>
      <Cell><St name="cycling" /></Cell>
      <Cell><St name="osnap3d" /><StArrow /></Cell>
    </Group>
    <Cell><St name="ucs" on /><St name="filter" /><StArrow /><St name="gizmo" on /><StArrow /></Cell>
    <Cell>
      <St name="annoVis" on /><St name="annoAuto" /><St name="anno" />
      <button type="button" className="w-[58px] whitespace-nowrap text-center">1:1 / 100%</button>
      <StArrow />
    </Cell>
    <Group>
      <Cell><St name="gear" /><StArrow /></Cell>
      <Cell><St name="plus" /></Cell>
    </Group>
    <Group>
      <Cell><St name="ruler" /><button type="button" className="w-[57px] pl-[5px] text-left font-medium">小数</button><StArrow /></Cell>
      <Cell><St name="quick" /></Cell>
    </Group>
    <Group>
      <Cell><St name="lockUi" /><StArrow /></Cell>
      <Cell><St name="isolate" /></Cell>
    </Group>
    <Cell><St name="clock" on /></Cell>
    <Cell><span className="px-[3px]"><St name="cadFile" /></span></Cell>
    <Cell><St name="full" /></Cell>
    <Cell><St name="burger" /></Cell>
  </footer>
)

const App = () => {
  return (
    <div className="h-screen bg-[#e9edf0]">
      <div className="flex h-full flex-col overflow-hidden rounded-lg border border-[#0a94d8] bg-[#222933] pb-[5px] font-['Noto_Sans','Noto_Sans_CJK_SC',sans-serif]">
        <TitleBar />
        <MenuBar />
        <FileTabs />
        <div className="mx-[3px] flex min-h-0 flex-1 flex-col bg-[#3b4453] pb-1">
          <Toolbars />
          <div className="flex min-h-0 flex-1 gap-1">
            <SideBar list="line xline pline polygon rect arc circle cloud spline ellipse ellipseArc insert makeBlock point hatch gradient region table text addSel" />
            <Canvas />
            <div className="mr-[3px] flex">
              <SideBar list="erase copyObj mirror offset array move rotate scale stretch trim extend breakPt breakObj join chamfer fillet blend explode" />
            </div>
          </div>
        </div>
        <LayoutTabs />
        <div className="h-[6px] shrink-0" />
        <StatusBar />
      </div>
    </div>
  )
}

export default App
